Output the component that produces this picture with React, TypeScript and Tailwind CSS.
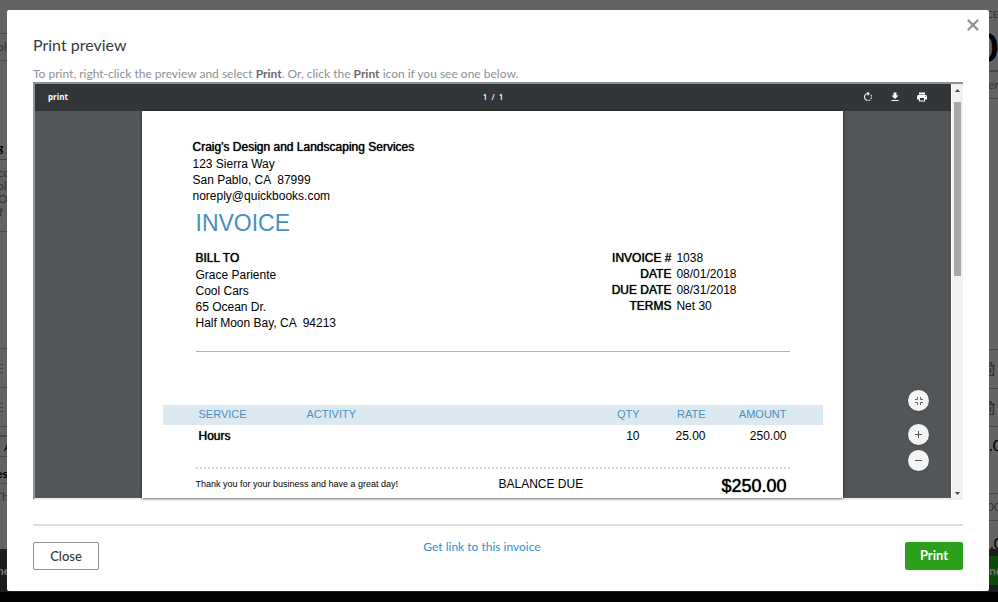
import { X } from "lucide-react";
import { MdFileDownload, MdPrint, MdRotateRight } from "react-icons/md";

interface Strip {
  text?: string;
  className: string;
}

// what is still visible of the invoice form on both sides of the dialog
const leftStrip: Strip[] = [
  { className: "h-[34px] border-b" },
  { text: "ol", className: "h-[27px] border-b -indent-[3px]" },
  { className: "h-[75px]" },
  { text: "g", className: "h-6 border-b -indent-[3px] font-bold text-black" },
  { className: "h-[6px]" },
  { text: "co", className: "h-[13px] -indent-[2px]" },
  { text: "ol", className: "h-[13px] -indent-[3px]" },
  { text: "O", className: "h-[13px] -indent-[2px]" },
  { text: "f N", className: "h-[13px] -indent-px" },
  { className: "h-[14px] border-b" },
  { className: "h-[117px] border-b" },
  { text: "dots", className: "h-[39px] border-b" },
  { text: "dots", className: "h-[39px] border-b" },
  { className: "h-[10px] border-b-2" },
  { text: "A", className: "h-[20px] border-b indent-[4px] text-black" },
  { text: "es", className: "h-[27px] border-b pt-2 -indent-[4px] font-bold text-black" },
  { text: "Th", className: "h-[26px] -indent-[5px]" },
];

const rightStrip: Strip[] = [
  { text: "CE", className: "h-[28px] -indent-[3px] text-[10px]" },
  { text: "0", className: "h-[44px] border-b-2 pb-1 -indent-[14px] text-[40px] font-bold text-black" },
  { text: "er", className: "h-[27px] border-b -indent-px" },
  { className: "h-[251px] border-b" },
  { text: "trash", className: "h-[39px] border-b" },
  { text: "trash", className: "h-[38px] border-b" },
  { text: ".0", className: "h-[36px] text-base text-black" },
  { className: "h-[31px] border-b" },
  { text: "00", className: "h-[27px] border-b -indent-[2px]" },
  { text: ".0", className: "h-[28px] pt-4 indent-px text-base text-black" },
];

const company = ["123 Sierra Way", "San Pablo, CA  87999", "noreply@quickbooks.com"];
const customer = ["Grace Pariente", "Cool Cars", "65 Ocean Dr.", "Half Moon Bay, CA  94213"];

const details = [
  { label: "INVOICE #", value: "1038" },
  { label: "DATE", value: "08/01/2018" },
  { label: "DUE DATE", value: "08/31/2018" },
  { label: "TERMS", value: "Net 30" },
];

const lines = [{ service: "Hours", activity: "", qty: "10", rate: "25.00", amount: "250.00" }];

const TrashIcon = () => (
  <svg className="-ml-[5px] h-[14px] w-[11px] shrink-0" viewBox="0 0 11 14" fill="none" stroke="#333" strokeWidth="1.3">
    <path d="M0 3.5h11M3.5 3V1h4v2M1.5 3.5v10h8v-10M4.5 6v5M6.5 6v5" />
  </svg>
);

const GripIcon = () => (
  <svg className="h-[9px] w-[4px] shrink-0" viewBox="0 0 4 9" fill="#333">
    <path d="M0 0h1v1H0zM0 4h1v1H0zM0 8h1v1H0zM2 0h1v1H2zM2 4h1v1H2zM2 8h1v1H2z" />
  </svg>
);

const SideStrip = ({ rows, className }: { rows: Strip[]; className: string }) => (
  <div className={`overflow-hidden ${className}`}>
    {rows.map((s, i) => (
      <div key={i} className={`flex items-center whitespace-nowrap border-[#484848] ${s.className}`}>
        {s.text === "trash" ? <TrashIcon /> : s.text === "dots" ? <GripIcon /> : s.text}
      </div>
    ))}
  </div>
);

const Backdrop = () => (
  <div
    aria-hidden="true"
    className="absolute inset-0 flex flex-col overflow-hidden bg-black pb-[10px] text-xs leading-none text-[#333]"
  >
    <div className="flex h-[549px] justify-between bg-[#636363]">
      <SideStrip rows={leftStrip} className="w-[7px]" />
      <SideStrip rows={rightStrip} className="w-[9px]" />
    </div>
    <div className="flex flex-1 items-center justify-between bg-[#1b1c1d] font-bold text-[#777]">
      <span className="w-[7px] overflow-hidden -indent-[3px]">ne</span>
      <span className="flex h-[29px] w-[9px] items-center overflow-hidden bg-[#0d4a09]">ne</span>
    </div>
  </div>
);

const FitIcon = () => (
  <svg className="size-2" viewBox="0 0 8 8" fill="none" stroke="#666">
    <path d="M0 2.5h2.5V0M5.5 0v2.5H8M8 5.5H5.5V8M2.5 8V5.5H0" />
  </svg>
);

const ZoomIcon = ({ plus }: { plus?: boolean }) => (
  <svg className="size-[9px]" viewBox="0 0 9 9" fill="none" stroke="#555">
    <path d={plus ? "M1 4.5h7M4.5 1v7" : "M1 4.5h7"} />
  </svg>
);

const InvoicePage = () => (
  <div className="mx-auto w-full max-w-[701px] bg-white pt-7 pb-[2px] font-['Liberation_Sans',Arial,sans-serif] text-xs leading-4 text-black shadow-[0_0_3px_#222]">
    <div className="pl-[51px]">
      <p className="mb-px [text-shadow:0_0_1px_#000]">Craig's Design and Landscaping Services</p>
      {company.map(line => (
        <p key={line} className="whitespace-pre">{line}</p>
      ))}
    </div>

    <div className="mr-[53px] ml-[54px]">
      <h2 className="mt-[3px] text-[23px] leading-8 text-[#4a8fbf]">INVOICE</h2>
      <div className="mt-[11px] flex justify-between border-b border-[#8fb9d6] pb-5">
        <div>
          <p className="mb-px [text-shadow:0_0_1px_#000]">BILL TO</p>
          {customer.map(line => (
            <p key={line} className="whitespace-pre">{line}</p>
          ))}
        </div>
        <dl className="mr-[53px] grid grid-cols-[auto_auto] content-start gap-x-[5px]">
          {details.map(d => (
            <div key={d.label} className="contents">
              <dt className="text-right [text-shadow:0_0_1px_#000]">{d.label}</dt>
              <dd>{d.value}</dd>
            </div>
          ))}
        </dl>
      </div>
    </div>

    <div className="mr-5 ml-[21px] mt-[53px]">
      <table className="w-full table-fixed text-right">
        <thead className="bg-[#dce9f1] text-[11px] leading-[14px] text-[#4a8fbf]">
          <tr className="h-5">
            <th className="w-36 pb-[3px] pl-9 text-left font-normal">SERVICE</th>
            <th className="pb-[3px] text-left font-normal">ACTIVITY</th>
            <th className="w-16 pb-[3px] font-normal">QTY</th>
            <th className="w-[66px] pb-[3px] font-normal">RATE</th>
            <th className="w-[117px] pr-9 pb-[3px] font-normal">AMOUNT</th>
          </tr>
        </thead>
        <tbody>
          {lines.map(l => (
            <tr key={l.service} className="h-6">
              <td className="pb-[2px] pl-9 text-left [text-shadow:0_0_1px_#000]">{l.service}</td>
              <td className="pb-[2px] text-left">{l.activity}</td>
              <td className="pb-[2px]">{l.qty}</td>
              <td className="pb-[2px]">{l.rate}</td>
              <td className="pr-9 pb-[2px]">{l.amount}</td>
            </tr>
          ))}
        </tbody>
      </table>
    </div>

    <div className="mr-[53px] ml-[54px] mt-[18px] flex border-t-2 border-dotted border-[#d6d6d6] pt-[7px]">
      <p className="flex-1 text-[9px]">Thank you for your business and have a great day!</p>
      <p className="w-[150px]">BALANCE DUE</p>
      <p className="w-[141px] pt-px pr-[3px] text-right text-lg leading-[19px] [text-shadow:0_0_1px_#000]">$250.00</p>
    </div>
  </div>
);

const PdfViewer = () => (
  <div className="flex border-2 border-r-0 border-[#8f9193] border-b-[#eee] bg-[#f1f1f1]">
    <div className="relative min-w-0 flex-1 bg-[#525659]">
      <div className="grid h-[27px] grid-cols-3 items-center bg-[#323639] px-[13px] pb-px font-['Open_Sans',sans-serif] text-[8px] text-white">
        <span className="font-bold">print</span>
        <span className="text-center font-semibold">1&nbsp; /&nbsp; 1</span>
        <div className="mr-[10px] flex justify-end gap-[15px]">
          <button aria-label="Rotate clockwise"><MdRotateRight size={12} /></button>
          <button aria-label="Download"><MdFileDownload size={12} /></button>
          <button aria-label="Print document"><MdPrint size={12} /></button>
        </div>
      </div>
      <div className="pr-[2px]">
        <InvoicePage />
      </div>
      <div className="absolute right-[22px] bottom-[27px] flex flex-col [&>button]:flex [&>button]:size-[21px] [&>button]:items-center [&>button]:justify-center [&>button]:rounded-full [&>button]:bg-[#f4f4f4] [&>button]:shadow">
        <button aria-label="Fit to page" className="mb-[13px]"><FitIcon /></button>
        <button aria-label="Zoom in" className="mb-[5px]"><ZoomIcon plus /></button>
        <button aria-label="Zoom out"><ZoomIcon /></button>
      </div>
    </div>
    <div className="flex w-3 flex-col items-center border-l border-white pt-[5px] pb-[3px]">
      <svg className="h-[3px] w-[5px]" viewBox="0 0 5 3"><path d="M0 3 2.5 0 5 3z" fill="#444" /></svg>
      <div className="mt-[10px] h-[174px] w-[7px] bg-[#a8a8a8]" />
      <svg className="mt-auto h-[3px] w-[5px]" viewBox="0 0 5 3"><path d="M0 0 2.5 3 5 0z" fill="#444" /></svg>
    </div>
  </div>
);

export default function App() {
  return (
    <div className="relative min-h-screen font-[Lato,sans-serif]">
      <Backdrop />
      <div
        role="dialog"
        aria-labelledby="preview-title"
        className="relative pt-[10px] pr-[9px] pl-[7px]"
      >
        <div className="relative rounded-[2px] bg-white px-[26px] pt-[23px] pb-[21px]">
          <button aria-label="Close dialog" className="absolute top-[6px] right-[7px] text-[#8d9096]">
            <X size={18} strokeWidth={3} />
          </button>
          <h1 id="preview-title" className="text-base leading-6 text-[#393a3d]">Print preview</h1>
          <p className="mt-2 text-xs leading-[17px] text-[#8d9096]">
            To print, right-click the preview and select <b className="text-[#6b6c72]">Print</b>. Or, click the{" "}
            <b className="text-[#6b6c72]">Print</b> icon if you see one below.
          </p>
          <PdfViewer />
          <div className="mt-6 flex items-start border-t-2 border-[#dcdee3] pt-4">
            <button className="h-7 w-[66px] rounded-[2px] border border-[#8d9096] pt-[2px] text-[13px] font-medium text-[#393a3d]">
              Close
            </button>
            <div className="flex flex-1 justify-center pr-10">
              <a href="#invoice-link" className="text-xs leading-[10px] text-[#2f8fcf]">Get link to this invoice</a>
            </div>
            <button className="h-7 w-[58px] rounded-[2px] bg-[#2ca01c] text-[13px] font-bold text-white">Print</button>
          </div>
        </div>
      </div>
    </div>
  );
}
